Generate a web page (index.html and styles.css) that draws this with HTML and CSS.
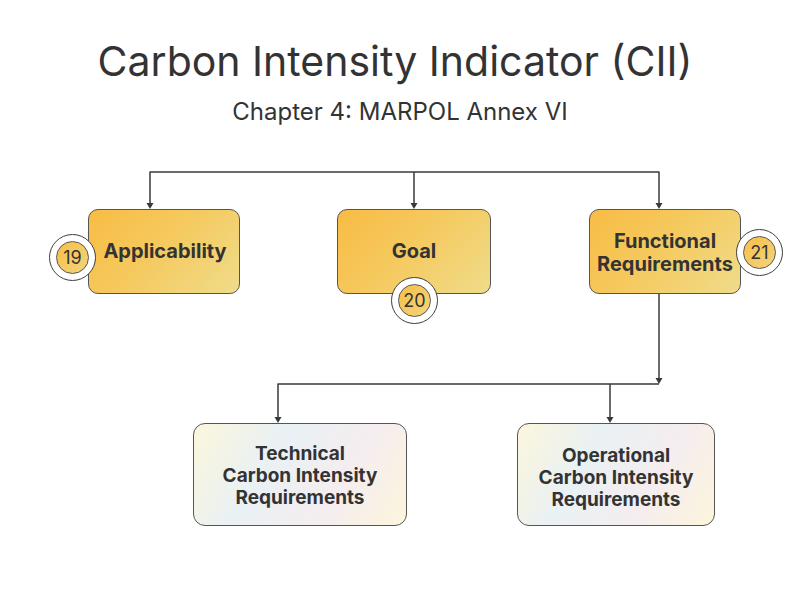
FILE: index.html
```html
<!DOCTYPE html>
<html lang="en">
<head>
<meta charset="utf-8">
<title>Carbon Intensity Indicator (CII)</title>
<link rel="stylesheet" href="styles.css">
</head>
<body>
<header class="header">
  <h1 class="title">Carbon Intensity Indicator (CII)</h1>
  <p class="subtitle">Chapter 4: MARPOL Annex VI</p>
</header>
<main class="diagram">
  <svg class="wires" width="800" height="420" viewBox="0 0 800 420" aria-hidden="true">
    <g fill="none" stroke="#3a3a3a" stroke-width="1.5" stroke-linejoin="round">
      <path d="M150 65 V32 H659 V65"/>
      <path d="M414 32 V65"/>
      <path d="M659 154 V240"/>
      <path d="M659 244 H278 V279"/>
      <path d="M610 244 V279"/>
    </g>
    <g fill="#3a3a3a">
      <polygon points="146.5,63 153.5,63 150,69"/>
      <polygon points="410.5,63 417.5,63 414,69"/>
      <polygon points="655.5,63 662.5,63 659,69"/>
      <polygon points="655.5,238 662.5,238 659,244"/>
      <polygon points="274.5,277 281.5,277 278,283"/>
      <polygon points="606.5,277 613.5,277 610,283"/>
    </g>
  </svg>

  <div class="node node-warm node-app">Applicability</div>
  <div class="node node-warm node-goal">Goal</div>
  <div class="node node-warm node-func">Functional<br>Requirements</div>
  <div class="node node-soft node-tech">Technical<br>Carbon Intensity<br>Requirements</div>
  <div class="node node-soft node-oper">Operational<br>Carbon Intensity<br>Requirements</div>

  <div class="badge badge-19"><span class="badge-inner">19</span></div>
  <div class="badge badge-20"><span class="badge-inner">20</span></div>
  <div class="badge badge-21"><span class="badge-inner">21</span></div>
</main>
</body>
</html>
```
FILE: styles.css
```css
* { box-sizing: border-box; }

html, body {
  margin: 0;
  padding: 0;
  background: #ffffff;
}

body {
  width: 800px;
  height: 600px;
  overflow: hidden;
  font-family: "Inter", "Noto Sans", "Liberation Sans", sans-serif;
  color: #333333;
}

.header {
  display: flex;
  flex-direction: column;
  align-items: center;
  padding-top: 41px;
}

.title {
  margin: 0;
  font-size: 41px;
  line-height: 41px;
  font-weight: 400;
  letter-spacing: 0;
  color: #333333;
  transform: translateX(-5px);
}

.subtitle {
  margin: 18px 0 0;
  font-size: 24px;
  line-height: 24px;
  font-weight: 400;
  color: #333333;
}

.diagram {
  position: relative;
  width: 800px;
  height: 420px;
  margin-top: 16px;
}

.wires {
  position: absolute;
  left: 0;
  top: 0;
}

.node {
  position: absolute;
  display: flex;
  align-items: center;
  justify-content: center;
  text-align: center;
  font-weight: 700;
  color: #333333;
  border: 1px solid #555555;
}

.node-warm {
  top: 69px;
  height: 85px;
  border-radius: 10px;
  font-size: 20px;
  line-height: 23px;
  background: linear-gradient(135deg, #f8bc44 0%, #f5c95e 45%, #f0dc8a 100%);
}

.node-soft {
  top: 283px;
  height: 103px;
  border-radius: 12px;
  font-size: 19px;
  line-height: 22px;
  background: linear-gradient(120deg, #fcf6dc 0%, #e9f1f4 35%, #f5edef 68%, #fcf5dc 100%);
}

.node-app { left: 88px; width: 152px; padding-left: 2px; }
.node-goal { left: 337px; width: 154px; }
.node-func { left: 589px; width: 152px; padding-top: 3px; }
.node-tech { left: 193px; width: 214px; padding-top: 2px; }
.node-oper { left: 517px; width: 198px; padding-top: 6px; }

.badge {
  position: absolute;
  width: 47px;
  height: 47px;
  border-radius: 50%;
  background: #ffffff;
  border: 1.5px solid #3f3f3f;
  display: flex;
  align-items: center;
  justify-content: center;
}

.badge-inner {
  width: 33px;
  height: 33px;
  border-radius: 50%;
  border: 1px solid #555555;
  background: linear-gradient(135deg, #f8bf48 0%, #f2d47c 100%);
  display: flex;
  align-items: center;
  justify-content: center;
  font-size: 18px;
  font-weight: 400;
  color: #333333;
}

.badge-19 { left: 49px; top: 94px; }
.badge-20 { left: 391px; top: 137px; }
.badge-21 { left: 736px; top: 89px; }
```
